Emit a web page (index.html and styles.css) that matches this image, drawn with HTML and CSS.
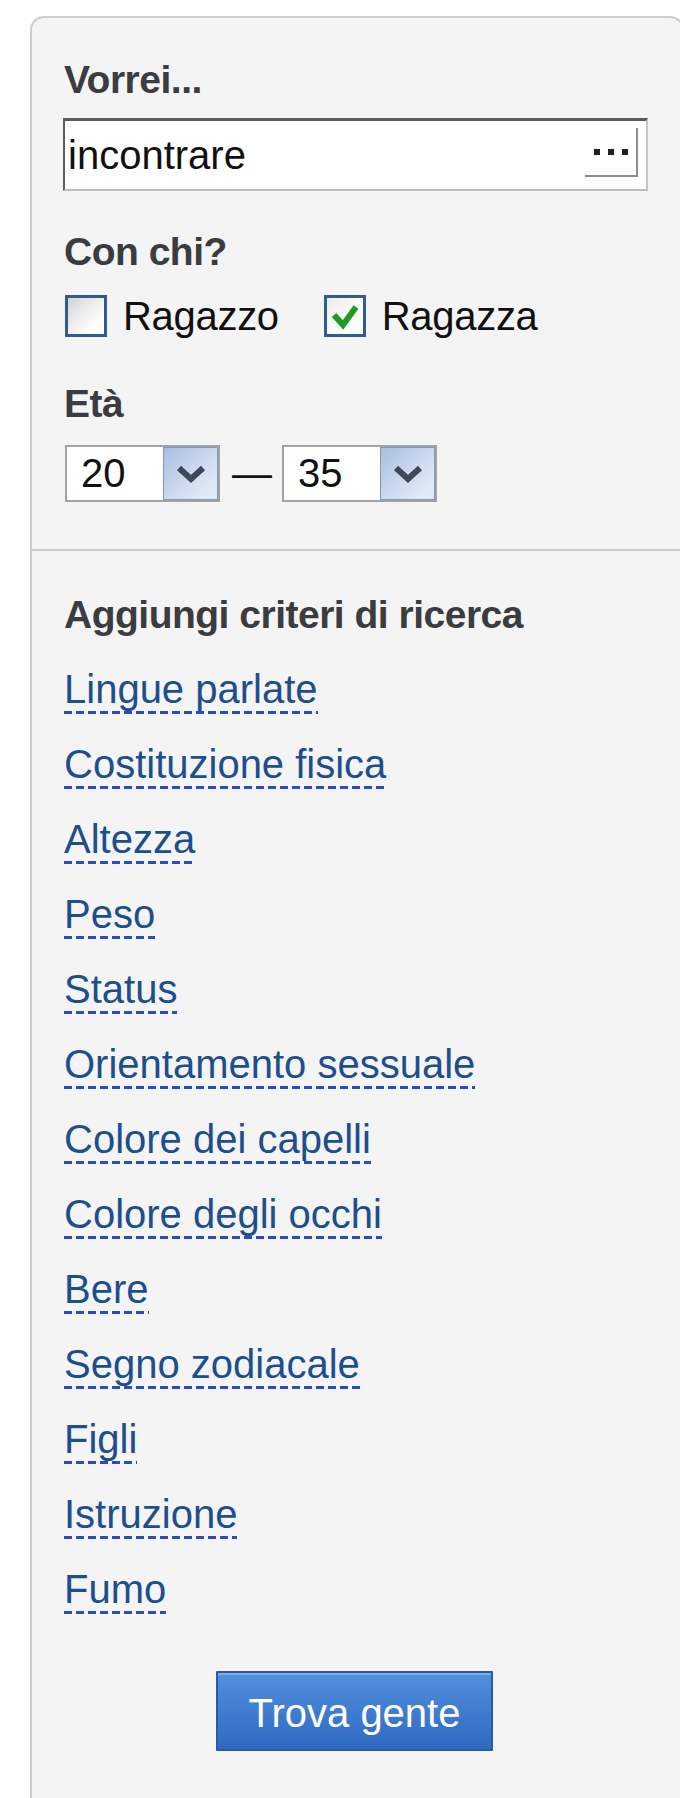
FILE: index.html
```html
<!doctype html>
<html lang="it">
<head>
	<meta charset="UTF-8">
	<title>Cerca</title>

	<link rel="stylesheet" href="styles.css">
</head>
<body>
	<div class="panel">
		<div class="section">
			<div class="label">Vorrei...</div>
			<div class="field">
				<span class="field-text">incontrare</span>
				<span class="more">
					<svg width="34" height="6" viewBox="0 0 34 6"><rect x="0" y="0" width="6" height="6" fill="#222"/><rect x="14" y="0" width="6" height="6" fill="#222"/><rect x="28" y="0" width="6" height="6" fill="#222"/></svg>
				</span>
			</div>

			<div class="label label-gap">Con chi?</div>
			<div class="checks">
				<label class="check"><span class="box"></span>Ragazzo</label>
				<label class="check"><span class="box checked"><svg width="36" height="36" viewBox="0 0 36 36"><path d="M7 17 L16 27 L29 9" fill="none" stroke="#1f9a22" stroke-width="6" stroke-linejoin="miter"/></svg></span>Ragazza</label>
			</div>

			<div class="label label-age">Età</div>
			<div class="age">
				<div class="select">
					<span class="select-value">20</span>
					<span class="arrow"><svg width="53" height="53" viewBox="0 0 53 53"><path d="M15 20 L27 31 L39 20" fill="none" stroke="#3d4859" stroke-width="6"/></svg></span>
				</div>
				<span class="dash">—</span>
				<div class="select">
					<span class="select-value">35</span>
					<span class="arrow"><svg width="53" height="53" viewBox="0 0 53 53"><path d="M15 20 L27 31 L39 20" fill="none" stroke="#3d4859" stroke-width="6"/></svg></span>
				</div>
			</div>
		</div>

		<div class="section criteria">
			<div class="label">Aggiungi criteri di ricerca</div>
			<ul class="links">
				<li><a href="#">Lingue parlate</a></li>
				<li><a href="#">Costituzione fisica</a></li>
				<li><a href="#">Altezza</a></li>
				<li><a href="#">Peso</a></li>
				<li><a href="#">Status</a></li>
				<li><a href="#">Orientamento sessuale</a></li>
				<li><a href="#">Colore dei capelli</a></li>
				<li><a href="#">Colore degli occhi</a></li>
				<li><a href="#">Bere</a></li>
				<li><a href="#">Segno zodiacale</a></li>
				<li><a href="#">Figli</a></li>
				<li><a href="#">Istruzione</a></li>
				<li><a href="#">Fumo</a></li>
			</ul>

			<div class="actions">
				<button class="btn" type="button">Trova gente</button>
			</div>
		</div>
	</div>
</body>
</html>
```

FILE: styles.css
```css
html {
	box-sizing: border-box;
}

*, *:before, *:after {
	box-sizing: inherit;
}

body {
	margin: 0;
	overflow: hidden;
	background: #fff;
	font-family: "Liberation Sans", Arial, sans-serif;
	font-size: 40px;
	color: #111;
}

.panel {
	width: 654px;
	min-height: 1782px;
	margin: 16px 0 0 30px;
	background: #f4f4f4;
	border: 2px solid #cdcdcd;
	border-bottom: none;
	border-radius: 14px 14px 0 0;
}

.section {
	padding: 39px 32px 47px;
	border-bottom: 2px solid #cacaca;
}

.criteria {
	padding-top: 41px;
	border-bottom: none;
}

.label {
	font-size: 39px;
	font-weight: bold;
	line-height: 46px;
	letter-spacing: -0.5px;
	color: #3a3c40;
}

.label-gap {
	margin-top: 38px;
}

.label-age {
	margin-top: 44px;
}

/* text field */
.field {
	display: flex;
	width: 585px;
	height: 73px;
	margin: 15px 0 0 -1px;
	background: #fff;
	border: 2px solid;
	border-top-width: 3px;
	border-color: #5c5c5c #c6c6c6 #bdbdbd #5c5c5c;
}

.field-text {
	padding-left: 3px;
	line-height: 68px;
	color: #111;
}

.more {
	display: flex;
	align-items: center;
	justify-content: center;
	width: 53px;
	height: 49px;
	margin: 7px 8px 0 auto;
	border-right: 2px solid #8e8e8e;
	border-bottom: 2px solid #8e8e8e;
}

/* checkboxes */
.checks {
	display: flex;
	margin-top: 20px;
}

.check {
	display: flex;
	align-items: center;
	line-height: 42px;
	letter-spacing: -0.3px;
	color: #111;
}

.check + .check {
	margin-left: 44px;
}

.box {
	display: block;
	width: 42px;
	height: 42px;
	margin: 0 16px 0 1px;
	border: 3px solid #2f5d8f;
	background: linear-gradient(135deg, #d4d4d4, #fff 75%);
}

.box.checked {
	background: linear-gradient(135deg, #ececec, #fff 70%);
}

.box svg {
	display: block;
}

/* age range */
.age {
	display: flex;
	align-items: center;
	margin-top: 18px;
}

.select {
	display: flex;
	width: 155px;
	height: 57px;
	margin-left: 1px;
	background: #fff;
	border: 2px solid #a3a3a3;
}

.select-value {
	flex: 1;
	padding-left: 14px;
	line-height: 53px;
	color: #111;
}

.arrow {
	width: 55px;
	border: 1px solid #8497b6;
	background: linear-gradient(135deg, #a9bee2, #dfe8f6 80%);
}

.arrow svg {
	display: block;
}

.dash {
	margin: 0 9px 0 12px;
	color: #111;
}

/* criteria links */
.links {
	margin: 14px 0 0;
	padding: 0;
	list-style: none;
}

.links li {
	line-height: 75px;
}

.links a {
	padding-bottom: 3px;
	color: #1d4e8d;
	text-decoration: none;
	background: repeating-linear-gradient(to right, #2a4cc2 0, #2a4cc2 8px, transparent 8px, transparent 12px) left bottom / 100% 3px no-repeat;
}

.actions {
	margin-top: 44px;
	padding-right: 5px;
	text-align: center;
}

.btn {
	width: 277px;
	height: 80px;
	padding: 4px 0 0;
	font-family: inherit;
	font-size: 40px;
	color: #fff;
	background: linear-gradient(#5390de, #2d69c2);
	border: 2px solid #2a5aa5;
	border-radius: 1px;
	box-shadow: inset 0 2px 0 rgba(255, 255, 255, 0.25);
}
```
